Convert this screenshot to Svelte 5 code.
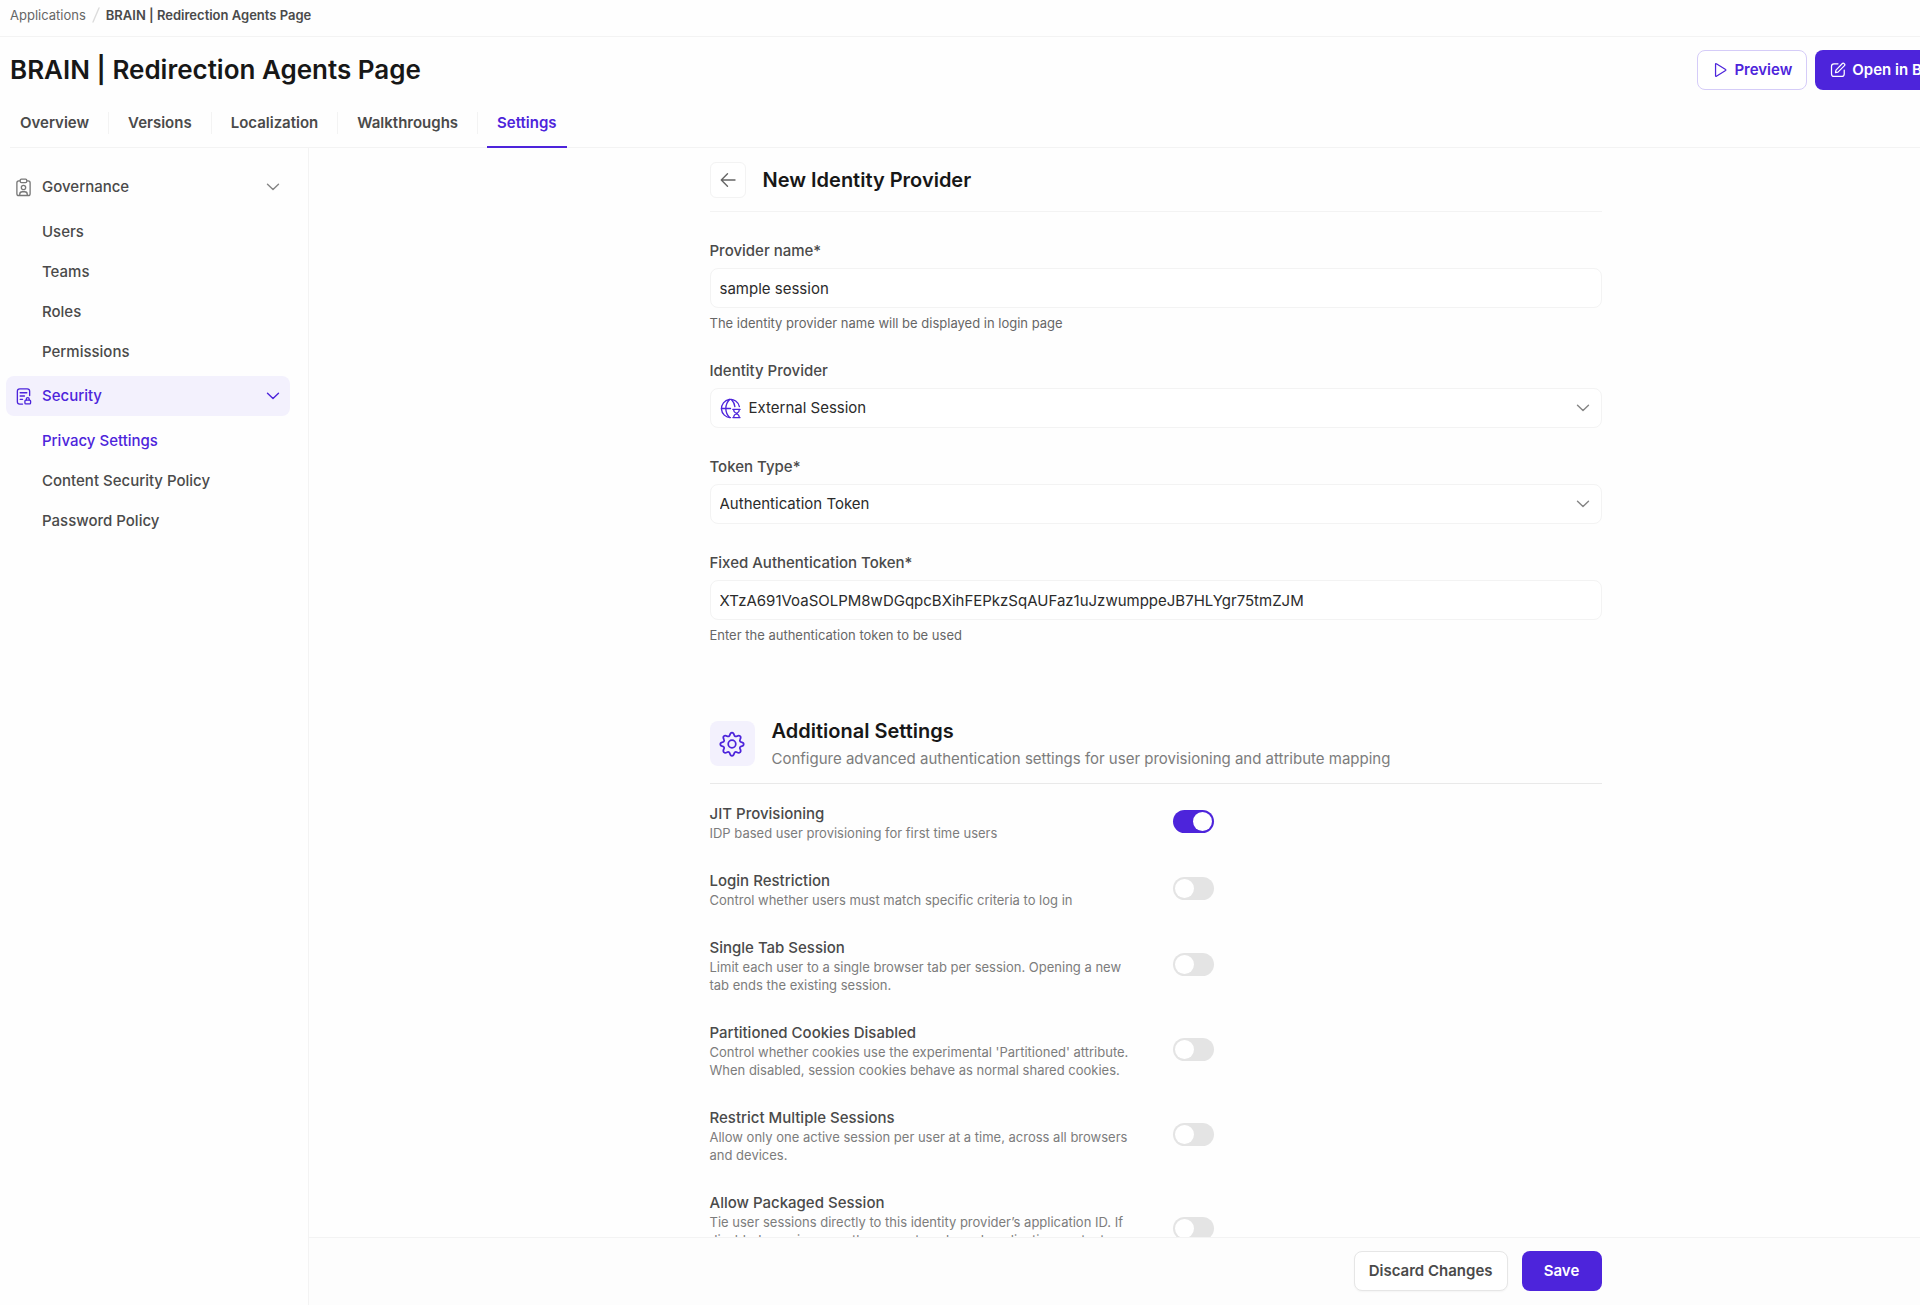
<script lang="ts">
  type NavItem = { label: string; href: string };
  type Setting = { id: string; title: string; text: string; tall?: boolean };

  const tabs: NavItem[] = [
    { label: 'Overview', href: '#overview' },
    { label: 'Versions', href: '#versions' },
    { label: 'Localization', href: '#localization' },
    { label: 'Walkthroughs', href: '#walkthroughs' },
    { label: 'Settings', href: '#settings' }
  ];

  const governance: NavItem[] = [
    { label: 'Users', href: '#users' },
    { label: 'Teams', href: '#teams' },
    { label: 'Roles', href: '#roles' },
    { label: 'Permissions', href: '#permissions' }
  ];

  const security: NavItem[] = [
    { label: 'Privacy Settings', href: '#privacy' },
    { label: 'Content Security Policy', href: '#csp' },
    { label: 'Password Policy', href: '#password' }
  ];

  const settings: Setting[] = [
    {
      id: 'jit',
      title: 'JIT Provisioning',
      text: 'IDP based user provisioning for first time users'
    },
    {
      id: 'login',
      title: 'Login Restriction',
      text: 'Control whether users must match specific criteria to log in'
    },
    {
      id: 'single-tab',
      title: 'Single Tab Session',
      text: 'Limit each user to a single browser tab per session. Opening a new tab ends the existing session.'
    },
    {
      id: 'cookies',
      title: 'Partitioned Cookies Disabled',
      text: "Control whether cookies use the experimental 'Partitioned' attribute. When disabled, session cookies behave as normal shared cookies."
    },
    {
      id: 'multiple',
      title: 'Restrict Multiple Sessions',
      text: 'Allow only one active session per user at a time, across all browsers and devices.'
    },
    {
      id: 'packaged',
      title: 'Allow Packaged Session',
      text: 'Tie user sessions directly to this identity provider’s application ID. If disabled, sessions use the current packaged application context.',
      tall: true
    }
  ];

  let activeTab = $state('Settings');
  let activePage = $state('Privacy Settings');
  let governanceOpen = $state(true);
  let securityOpen = $state(true);

  let providerName = $state('sample session');
  let provider = $state('External Session');
  let tokenType = $state('Authentication Token');
  let token = $state('XTzA691VoaSOLPM8wDGqpcBXihFEPkzSqAUFaz1uJzwumppeJB7HLYgr75tmZJM');
  let enabled: Record<string, boolean> = $state({ jit: true });
</script>

{#snippet chevron()}
  <svg class="chevron" viewBox="0 0 16 16" aria-hidden="true"><path d="M2.5 5.2 8 10.6l5.5-5.4" /></svg>
{/snippet}

<div class="app">
  <nav class="breadcrumb" aria-label="Breadcrumb">
    <a href="#applications">Applications</a>
    <svg class="slash" viewBox="0 0 8 16" aria-hidden="true"><path d="M7 1 1 15" /></svg>
    <strong>BRAIN | Redirection Agents Page</strong>
  </nav>

  <header>
    <div class="title_row">
      <h1>BRAIN | Redirection Agents Page</h1>
      <div class="actions">
        <button class="btn outline">
          <svg viewBox="0 0 18 18" aria-hidden="true"><path d="M4 2.4v13.2c0 .5.5.8.9.5l10.4-6.6c.4-.3.4-.8 0-1L4.900 1.900c-.4-.3-.9 0-.9.5Z" /></svg>
          Preview
        </button>
        <button class="btn primary">
          <svg viewBox="0 0 18 18" aria-hidden="true">
            <path d="M9 2H4.500A2.800 2.800 0 0 0 1.700 4.800v8.700a2.800 2.800 0 0 0 2.800 2.800h8.700a2.800 2.800 0 0 0 2.800-2.800V9" />
            <path d="m6.200 11.900.5-2.800 7.200-7.400a1.300 1.300 0 0 1 1.900 0l.5.5a1.300 1.300 0 0 1 0 1.900L9 11.400l-2.800.5Z" />
          </svg>
          Open in Builder
        </button>
      </div>
    </div>
    <nav class="tabs" aria-label="Sections">
      {#each tabs as tab}
        <a href={tab.href} class:active={activeTab === tab.label} onclick={() => (activeTab = tab.label)}>
          {tab.label}
        </a>
      {/each}
    </nav>
  </header>

  <div class="body">
    <aside>
      <button class="group" aria-expanded={governanceOpen} onclick={() => (governanceOpen = !governanceOpen)}>
        <svg viewBox="0 0 18 20" aria-hidden="true">
          <path d="M5.500 3H4a2 2 0 0 0-2 2v11.500a2 2 0 0 0 2 2h10a2 2 0 0 0 2-2V5a2 2 0 0 0-2-2h-1.500" />
          <rect x="5.500" y="1.200" width="7" height="3.600" rx="1.300" />
          <circle cx="9" cy="10" r="2.300" />
          <path d="M5 18.300v-1a2.800 2.800 0 0 1 2.800-2.800h2.400a2.800 2.800 0 0 1 2.800 2.800v1" />
        </svg>
        <span>Governance</span>
        {@render chevron()}
      </button>
      {#if governanceOpen}
        <ul>
          {#each governance as item}
            <li>
              <a href={item.href} class:active={activePage === item.label} onclick={() => (activePage = item.label)}>
                {item.label}
              </a>
            </li>
          {/each}
        </ul>
      {/if}

      <button class="group current" aria-expanded={securityOpen} onclick={() => (securityOpen = !securityOpen)}>
        <svg viewBox="0 0 18 20" aria-hidden="true">
          <path d="M8 18H5a2.500 2.500 0 0 1-2.500-2.500v-11A2.500 2.500 0 0 1 5 2h8a2.500 2.500 0 0 1 2.500 2.500V9" />
          <path d="M5.500 6h7M5.500 9.500h4.500M5.500 13h2.500" />
          <rect x="10.500" y="13.800" width="6" height="4" rx="1" />
          <path d="M12 13.600v-1a1.500 1.500 0 0 1 3 0v1" />
        </svg>
        <span>Security</span>
        {@render chevron()}
      </button>
      {#if securityOpen}
        <ul>
          {#each security as item}
            <li>
              <a href={item.href} class:active={activePage === item.label} onclick={() => (activePage = item.label)}>
                {item.label}
              </a>
            </li>
          {/each}
        </ul>
      {/if}
    </aside>

    <main>
      <div class="scroll">
        <div class="column">
          <div class="page_head">
            <button class="back" aria-label="Back">
              <svg viewBox="0 0 18 18" aria-hidden="true"><path d="M16 9H2.500M8.500 2.800 2.300 9l6.200 6.200" /></svg>
            </button>
            <h2>New Identity Provider</h2>
          </div>

          <form class="fields">
            <div class="field">
              <label for="provider-name">Provider name*</label>
              <input id="provider-name" type="text" bind:value={providerName} />
              <small>The identity provider name will be displayed in login page</small>
            </div>

            <div class="field">
              <label for="provider">Identity Provider</label>
              <div class="select with_icon">
                <svg class="globe" viewBox="0 0 22 22" aria-hidden="true">
                  <path d="M11 20.500A9.500 9.500 0 1 1 20.300 9" />
                  <path d="M1.500 11H11" />
                  <path d="M10 1.600C4.800 7 4.800 15 10 20.400" />
                  <path d="M12 1.600c2 2.200 3.200 4.600 3.600 7.400" />
                  <path d="M13.500 12h7.500M13.500 20.500h7.500M14.500 12v1.500c0 1.500 5.500 4 5.500 5.500v1.500M20 12v1.500c0 1.500-5.500 4-5.500 5.500v1.500" />
                </svg>
                <select id="provider" bind:value={provider}>
                  <option>External Session</option>
                </select>
                {@render chevron()}
              </div>
            </div>

            <div class="field">
              <label for="token-type">Token Type*</label>
              <div class="select">
                <select id="token-type" bind:value={tokenType}>
                  <option>Authentication Token</option>
                </select>
                {@render chevron()}
              </div>
            </div>

            <div class="field">
              <label for="token">Fixed Authentication Token*</label>
              <input id="token" type="text" bind:value={token} />
              <small>Enter the authentication token to be used</small>
            </div>
          </form>

          <section>
            <div class="section_head">
              <div class="section_icon">
                <svg viewBox="0 0 24 24" aria-hidden="true">
                  <path d="M12 1.500c1.400 0 1.700 1 2 2.200.3 1.200 1.500 1.700 2.500 1.100 1.100-.7 2-1.100 3 0 1 .9.600 1.900 0 3-.7 1-.1 2.200 1.100 2.500 1.200.2 2.200.5 2.200 1.900s-1 1.700-2.200 1.900c-1.200.3-1.800 1.500-1.100 2.500.6 1.100 1 2.100 0 3-1 1.100-1.900.7-3 0-1-.6-2.200-.1-2.500 1.100-.3 1.200-.6 2.200-2 2.200s-1.700-1-2-2.200c-.3-1.200-1.500-1.700-2.500-1.100-1.100.7-2 1.100-3 0-1-.9-.6-1.900 0-3 .7-1 .1-2.200-1.100-2.500-1.200-.2-2.200-.5-2.200-1.900s1-1.700 2.200-1.900c1.200-.3 1.800-1.500 1.100-2.500-.6-1.100-1-2.100 0-3 1-1.100 1.900-.7 3 0 1 .6 2.200.1 2.500-1.100.3-1.200.6-2.200 2-2.200Z" />
                  <circle cx="12" cy="12" r="3.500" />
                </svg>
              </div>
              <div>
                <h2>Additional Settings</h2>
                <p>Configure advanced authentication settings for user provisioning and attribute mapping</p>
              </div>
            </div>

            <div class="settings">
              {#each settings as setting}
                <div class="setting" class:tall={setting.tall}>
                  <div>
                    <label for={setting.id}>{setting.title}</label>
                    <p>{setting.text}</p>
                  </div>
                  <input id={setting.id} type="checkbox" role="switch" bind:checked={enabled[setting.id]} />
                </div>
              {/each}
            </div>
          </section>
        </div>
      </div>

      <footer>
        <div class="column">
          <button class="btn plain">Discard Changes</button>
          <button class="btn primary save">Save</button>
        </div>
      </footer>
    </main>
  </div>
</div>

<style>
  :global(body) {
    overflow: hidden;
    background: #fefefe;
  }

  .app {
    --primary: #4d24db;
    --primary-soft: #f3f1fd;
    --ink: #171717;
    --text: #4a4a4a;
    --muted: #7c7c7c;
    --line: #f3f3f3;

    display: flex;
    flex-direction: column;
    box-sizing: border-box;
    /* the workspace runs past the right edge of the window */
    width: calc(100% + 82px);
    height: 100vh;
    font-family: Inter, 'Liberation Sans', sans-serif;
    font-size: 15px;
    font-weight: 500;
    line-height: 20px;
    color: var(--text);
  }

  .app *,
  .app *::before {
    box-sizing: border-box;
  }

  a {
    color: inherit;
    text-decoration: none;
  }

  button,
  input,
  select {
    font: inherit;
    color: inherit;
  }

  button {
    cursor: pointer;
  }

  h1,
  h2,
  p,
  ul {
    margin: 0;
    padding: 0;
  }

  svg {
    flex: none;
    fill: none;
    stroke: currentColor;
    stroke-width: 1.4;
    stroke-linecap: round;
    stroke-linejoin: round;
  }

  .chevron {
    width: 16px;
    height: 16px;
    color: #858585;
  }

  .breadcrumb {
    display: flex;
    align-items: center;
    gap: 6px;
    height: 37px;
    padding: 0 10px 6px;
    border-bottom: 1px solid var(--line);
    font-size: 13px;
  }

  .breadcrumb a {
    font-weight: 400;
    color: #666;
  }

  .breadcrumb strong {
    font-weight: 600;
  }

  .slash {
    width: 8px;
    height: 16px;
    color: #dcdcdc;
  }

  header {
    padding-left: 10px;
  }

  .title_row {
    display: flex;
    align-items: center;
    justify-content: space-between;
    height: 66px;
    padding-right: 24px;
  }

  h1 {
    font-size: 26px;
    font-weight: 600;
    line-height: 32px;
    color: var(--ink);
  }

  .actions {
    display: flex;
    gap: 8px;
  }

  .btn {
    display: flex;
    align-items: center;
    justify-content: center;
    gap: 6px;
    height: 40px;
    padding: 0 14px;
    border: 1px solid transparent;
    border-radius: 8px;
    font-weight: 600;
    white-space: nowrap;
  }

  .btn svg {
    width: 16px;
    height: 16px;
  }

  .outline {
    background: white;
    border-color: #d5ccf8;
    color: var(--primary);
  }

  .primary {
    background: var(--primary);
    color: white;
  }

  .plain {
    background: white;
    border-color: #e6e6e6;
    box-shadow: 0 1px 2px #0000000a;
  }

  .save {
    width: 80px;
  }

  .tabs {
    display: flex;
    height: 45px;
    border-bottom: 1px solid var(--line);
    font-weight: 600;
  }

  .tabs a {
    display: flex;
    align-items: center;
    position: relative;
    height: 45px;
    padding: 0 10px 6px;
    margin-right: 19px;
  }

  .tabs a + a::before {
    content: '';
    position: absolute;
    left: -10px;
    top: 9px;
    width: 1px;
    height: 22px;
    background: var(--line);
  }

  .tabs .active {
    border-bottom: 2px solid var(--primary);
    padding-bottom: 4px;
    color: var(--primary);
  }

  .body {
    display: flex;
    flex: 1;
    min-height: 0;
  }

  aside {
    flex: none;
    width: 309px;
    padding: 19px 18px 0 6px;
    border-right: 1px solid var(--line);
  }

  .group {
    display: flex;
    align-items: center;
    gap: 10px;
    width: 100%;
    height: 40px;
    padding: 0 9px;
    border: 0;
    border-radius: 8px;
    background: none;
    text-align: left;
  }

  .group span {
    flex: 1;
  }

  .group svg:first-child {
    width: 17px;
    height: 19px;
    color: #777;
  }

  .current,
  .current svg:first-child,
  .current .chevron {
    color: var(--primary);
  }

  .current {
    background: var(--primary-soft);
  }

  ul {
    padding: 5px 0 4px;
    list-style: none;
  }

  li a {
    display: block;
    padding: 10px 0 10px 36px;
  }

  li .active {
    color: var(--primary);
  }

  main {
    display: flex;
    flex: 1;
    flex-direction: column;
    min-width: 0;
  }

  .scroll {
    flex: 1;
    min-height: 0;
    overflow: hidden auto;
    scrollbar-width: none;
  }

  .column {
    width: 100%;
    max-width: 892px;
    margin: 0 auto;
  }

  .page_head {
    display: flex;
    align-items: center;
    gap: 17px;
    padding: 14px 0 13px;
    border-bottom: 1px solid var(--line);
  }

  .back {
    display: grid;
    place-items: center;
    width: 36px;
    height: 36px;
    padding: 0;
    border: 1px solid var(--line);
    border-radius: 6px;
    background: white;
  }

  .back svg {
    width: 18px;
    height: 18px;
    color: #666;
  }

  h2 {
    font-size: 20px;
    font-weight: 600;
    line-height: 26px;
    color: var(--ink);
  }

  .fields {
    display: flex;
    flex-direction: column;
    gap: 29px;
    padding-top: 29px;
  }

  .field {
    display: flex;
    flex-direction: column;
  }

  .field label {
    margin-bottom: 7px;
  }

  .field input,
  select {
    width: 100%;
    height: 40px;
    padding: 0 9px;
    border: 1px solid var(--line);
    border-radius: 8px;
    background: white;
    appearance: none;
    font-weight: 400;
    color: #2b2b2b;
    outline-color: var(--primary);
  }

  small {
    padding-top: 6px;
    font-size: 13px;
    font-weight: 400;
    line-height: 18px;
    color: #666;
  }

  .select {
    position: relative;
  }

  .select .chevron {
    position: absolute;
    right: 11px;
    top: 12px;
    pointer-events: none;
  }

  .with_icon select {
    padding-left: 38px;
  }

  .globe {
    position: absolute;
    left: 10px;
    top: 10px;
    width: 21px;
    height: 21px;
    color: var(--primary);
    pointer-events: none;
  }

  section {
    padding-top: 74px;
  }

  .section_head {
    display: flex;
    align-items: center;
    gap: 17px;
    padding-bottom: 14px;
    border-bottom: 1px solid #e9e9e9;
  }

  .section_head p {
    padding-top: 5px;
    font-weight: 400;
    color: var(--muted);
  }

  .section_icon {
    display: grid;
    place-items: center;
    width: 45px;
    height: 45px;
    border-radius: 8px;
    background: var(--primary-soft);
  }

  .section_icon svg {
    width: 26px;
    height: 26px;
    stroke-width: 1.6;
    color: var(--primary);
  }

  .settings {
    display: flex;
    flex-direction: column;
    gap: 29px;
    padding: 20px 0 29px;
  }

  .setting {
    display: grid;
    grid-template-columns: 423px auto;
    justify-content: start;
    align-items: center;
    gap: 40px;
  }

  .setting label {
    display: block;
  }

  .setting p {
    font-size: 13px;
    font-weight: 400;
    line-height: 18px;
    color: var(--muted);
  }

  .setting.tall > div {
    min-height: 74px;
  }

  .setting input {
    width: 41px;
    height: 23px;
    margin: 0 0 3px;
    padding: 2px;
    border-radius: 12px;
    background: #e4e4e4;
    appearance: none;
    cursor: pointer;
  }

  .setting input::before {
    content: '';
    display: block;
    width: 19px;
    height: 19px;
    border-radius: 50%;
    background: white;
  }

  .setting input:checked {
    background: var(--primary);
  }

  .setting input:checked::before {
    margin-left: auto;
  }

  footer {
    padding: 13px 0 14px;
    border-top: 1px solid var(--line);
    background: #fdfdfd;
  }

  footer .column {
    display: flex;
    justify-content: flex-end;
    gap: 14px;
  }
</style>
